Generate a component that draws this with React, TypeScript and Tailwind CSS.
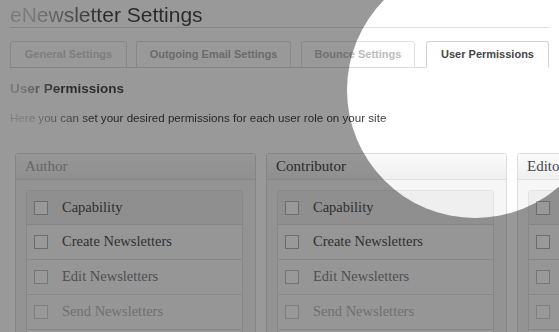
import React from 'react';

type Row = {
  label: string;
  text: string;
  box: string;
};

const rows: Row[] = [
  { label: 'Create Newsletters', text: 'text-[#505050]', box: 'border-[#b4b4b4]' },
  { label: 'Edit Newsletters', text: 'text-[#858585]', box: 'border-[#c4c4c4]' },
  { label: 'Send Newsletters', text: 'text-[#bababa]', box: 'border-[#d4d4d4]' },
];

const tabs = [
  { label: 'General Settings', width: 'w-[117px]', color: 'text-[#d2d2d2]' },
  { label: 'Outgoing Email Settings', width: 'w-[155px]', color: 'text-[#b3b3b3]' },
  { label: 'Bounce Settings', width: 'w-[114px]', color: 'text-[#bdbdbd]' },
];

const RolePanel = ({ title, titleColor }: { title: string; titleColor: string }) => {
  return (
    <div className="w-[241px] shrink-0 rounded-[3px] border border-[#dcdcdc] bg-[#f6f6f6]">
      <div
        className={`h-[26px] border-b border-[#e0e0e0] bg-gradient-to-b from-[#fbfbfb] to-[#efefef] pl-[9px] text-[15px] leading-[25px] ${titleColor}`}
      >
        {title}
      </div>

      <div className="pt-[10px] pr-[12px] pl-[10px]">
        <div className="rounded-[3px] border border-[#e3e3e3] bg-[#fbfbfb]">
          <div className="flex h-[34px] items-center border-b border-[#dedede] bg-[#efefef] pl-[7px]">
            <span className="h-[14px] w-[14px] border border-[#b4b4b4] bg-white" />
            <span className="ml-[14px] text-[14.5px] text-[#505050]">Capability</span>
          </div>

          {rows.map((row) => (
            <div
              key={row.label}
              className="flex h-[35px] items-center border-b border-[#e3e3e3] pl-[7px]"
            >
              <span className={`h-[14px] w-[14px] border bg-white ${row.box}`} />
              <span className={`ml-[14px] text-[14.5px] ${row.text}`}>{row.label}</span>
            </div>
          ))}

          <div className="h-[24px]" />
        </div>
      </div>
    </div>
  );
};

const App = () => {
  return (
    <div className="relative h-[332px] w-[559px] overflow-hidden bg-white font-['Liberation_Sans',Arial,sans-serif]">
      <div className="px-[10px]">
        <h1 className="border-b border-[#dedede] pt-[3px] text-[21px] leading-[24px] font-normal">
          <span className="inline-block bg-[linear-gradient(90deg,#c8c8c8_0px,#d0d0d0_20px,#464646_95px)] bg-clip-text text-transparent">
            eNewsletter Settings
          </span>
        </h1>

        <div className="mt-[13px] flex h-[27px] items-end border-b border-[#dcdcdc]">
          {tabs.map((tab, i) => (
            <div
              key={tab.label}
              className={`flex h-[26px] ${tab.width} ${i === 0 ? '' : i === 1 ? 'ml-[9px]' : 'ml-[10px]'} items-center justify-center rounded-t-[3px] border border-b-0 border-[#e2e2e2] bg-white text-[11px] font-bold ${tab.color}`}
            >
              {tab.label}
            </div>
          ))}
          <div className="-mb-px ml-[11px] flex h-[27px] w-[123px] items-center justify-center rounded-t-[3px] border border-b border-[#d2d2d2] border-b-white bg-white text-[11px] font-bold text-[#464646]">
            User Permissions
          </div>
        </div>

        <h2 className="mt-[12px] text-[13.5px] leading-[18px] font-bold">
          <span className="inline-block bg-[linear-gradient(90deg,#c9c9c9_0px,#c9c9c9_12px,#4a4a4a_50px)] bg-clip-text text-transparent">
            User Permissions
          </span>
        </h2>

        <p className="mt-[13px] text-[11.6px] leading-[14px]">
          <span className="inline-block bg-[linear-gradient(90deg,#d6d6d6_0px,#cfcfcf_15px,#3c3c3c_85px)] bg-clip-text text-transparent">
            Here you can set your desired permissions for each user role on your site
          </span>
        </p>

        <div className="mt-[28px] flex gap-[10px] pl-[5px] font-['Liberation_Serif','Times_New_Roman',serif]">
          <RolePanel title="Author" titleColor="text-[#aaa]" />
          <RolePanel title="Contributor" titleColor="text-[#464646]" />
          <RolePanel title="Editor" titleColor="text-[#464646]" />
        </div>
      </div>

      <div className="pointer-events-none absolute top-[-38px] left-[347px] h-[256px] w-[256px] rounded-full shadow-[0_0_0_800px_rgba(0,0,0,0.4)]" />
    </div>
  );
};

export default App;
